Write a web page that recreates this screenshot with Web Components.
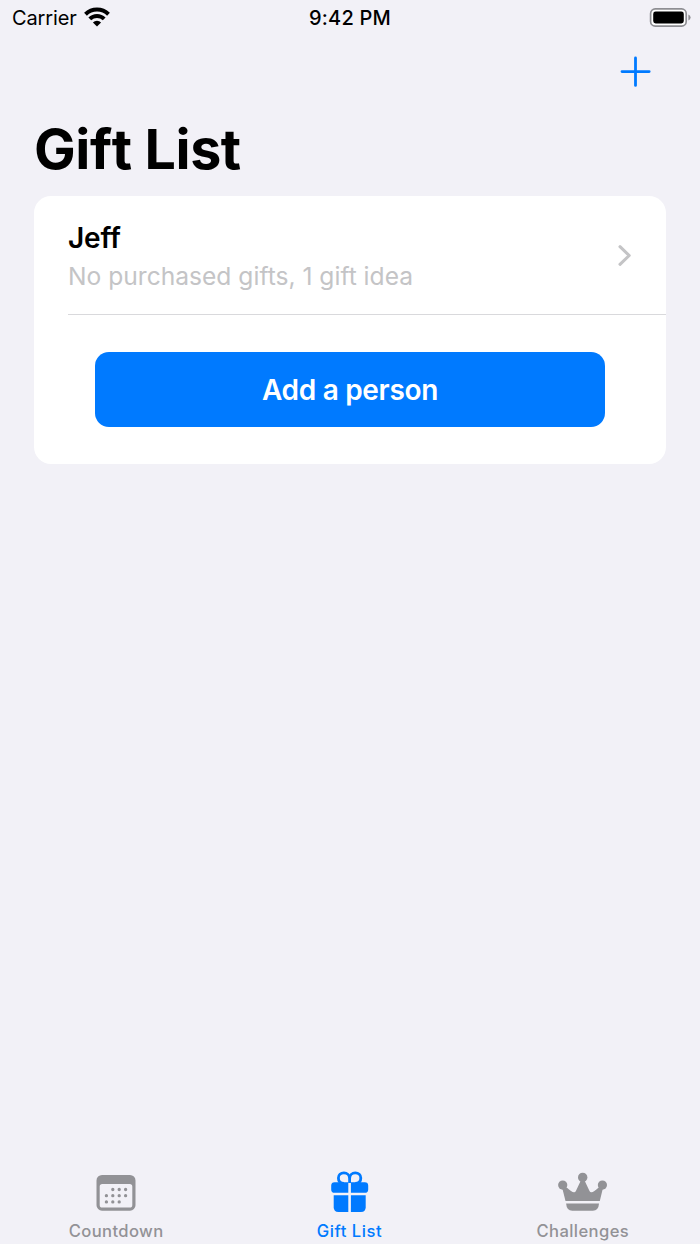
<!DOCTYPE html>
<html lang="en">
<head>
<meta charset="utf-8">
<title>Gift List</title>
<style>
  body {
    margin: 0;
    background: #f2f1f7;
    font-family: Inter, "Liberation Sans", sans-serif;
  }
</style>
</head>
<body>
<gift-app>
  <status-bar slot="status" carrier="Carrier" time="9:42 PM"></status-bar>
  <nav-header slot="header">Gift List</nav-header>
  <list-card>
    <person-row name="Jeff">No purchased gifts, 1 gift idea</person-row>
    <primary-button>Add a person</primary-button>
  </list-card>
  <tab-bar slot="tabs">
    <tab-item icon="calendar">Countdown</tab-item>
    <tab-item icon="gift" active>Gift List</tab-item>
    <tab-item icon="crown">Challenges</tab-item>
  </tab-bar>
</gift-app>

<script>
// Attach an open shadow root and fill it from a template
function mount(el, html) {
  const template = document.createElement('template')
  template.innerHTML = html
  el.attachShadow({ mode: 'open' }).appendChild(template.content.cloneNode(true))
}

class GiftApp extends HTMLElement {
  constructor() {
    super()
    mount(this, `
      <style>
        :host {
          display: flex;
          flex-direction: column;
          height: 1244px;
          width: 700px;
          overflow: hidden;
          background: #f2f1f7;
        }
        main { flex: 1; padding: 0 34px; }
      </style>
      <slot name="status"></slot>
      <slot name="header"></slot>
      <main><slot></slot></main>
      <slot name="tabs"></slot>
    `)
  }
}

class StatusBar extends HTMLElement {
  constructor() {
    super()
    mount(this, `
      <style>
        :host {
          display: grid;
          grid-template-columns: 1fr auto 1fr;
          align-items: center;
          height: 36px;
          padding: 0 9px 0 12px;
          font-size: 20px;
          line-height: 36px;
          color: #000;
        }
        .left { display: flex; align-items: center; gap: 7px; }
        .carrier { letter-spacing: -0.12px; }
        .time { font-weight: 500; letter-spacing: 0.2px; padding-right: 3px; }
        .right { display: flex; justify-content: flex-end; }
        svg { display: block; }
        .wifi { margin-bottom: 3px; }
      </style>
      <div class="left">
        <span class="carrier"></span>
        <svg class="wifi" width="26" height="20" viewBox="0 0 26 20">
          <g fill="none" stroke="#000" stroke-width="4">
            <path d="M1.500 7.300a16.400 16.400 0 0 1 23 0"/>
            <path d="M5.800 11.900a10.300 10.300 0 0 1 14.400 0"/>
          </g>
          <path d="M8.900 15.400a5.800 5.800 0 0 1 8.200 0L13 19.600z"/>
        </svg>
      </div>
      <span class="time"></span>
      <div class="right">
        <svg width="42" height="20" viewBox="0 0 42 20">
          <rect x="1.600" y="0.900" width="35.600" height="17.200" rx="4.600" fill="#fff" stroke="#8e8e93" stroke-width="1.700"/>
          <rect x="4.200" y="3.500" width="30.600" height="12" rx="2.400"/>
          <path d="M39.400 6.500q2.200 1 2.200 3t-2.200 3z" fill="#8e8e93"/>
        </svg>
      </div>
    `)
  }

  connectedCallback() {
    this.shadowRoot.querySelector('.carrier').textContent = this.getAttribute('carrier')
    this.shadowRoot.querySelector('.time').textContent = this.getAttribute('time')
  }
}

class NavHeader extends HTMLElement {
  constructor() {
    super()
    mount(this, `
      <style>
        :host { display: block; height: 160px; }
        .actions {
          display: flex;
          justify-content: flex-end;
          padding: 20px 49px 0 0;
        }
        button { border: 0; padding: 0; background: none; }
        svg { display: block; }
        h1 {
          margin: 28px 0 0 34px;
          font-size: 55.6px;
          line-height: 67px;
          font-weight: 700;
          font-kerning: none;
          letter-spacing: -0.4px;
          color: #000;
        }
      </style>
      <div class="actions">
        <button aria-label="Add">
          <svg width="31" height="31" viewBox="0 0 31 31">
            <path d="M15.500 2v27.400M2 15.600h27.200" stroke="#007aff" stroke-width="2.800" stroke-linecap="round"/>
          </svg>
        </button>
      </div>
      <h1><slot></slot></h1>
    `)
  }
}

class ListCard extends HTMLElement {
  constructor() {
    super()
    mount(this, `
      <style>
        :host {
          display: block;
          height: 268px;
          border-radius: 17px;
          background: #fff;
          overflow: hidden;
        }
      </style>
      <slot></slot>
    `)
  }
}

class PersonRow extends HTMLElement {
  constructor() {
    super()
    mount(this, `
      <style>
        :host {
          display: flex;
          align-items: center;
          box-sizing: border-box;
          height: 119px;
          margin-left: 34px;
          padding-right: 34px;
          border-bottom: 1px solid #d9d9dc;
        }
        .text { flex: 1; padding-top: 4px; }
        .name {
          font-size: 28px;
          line-height: 38px;
          font-weight: 600;
          letter-spacing: -0.2px;
          color: #000;
        }
        .detail {
          padding-bottom: 1px;
          font-size: 24.6px;
          line-height: 38px;
          letter-spacing: 0;
          color: #c4c4c6;
        }
        svg { display: block; }
      </style>
      <div class="text">
        <div class="name"></div>
        <div class="detail"><slot></slot></div>
      </div>
      <svg width="15" height="22" viewBox="0 0 15 22">
        <path d="M3 2.700l9.200 8.800L3 20.300" fill="none" stroke="#c4c4c6" stroke-width="3.100" stroke-linecap="round" stroke-linejoin="round"/>
      </svg>
    `)
  }

  connectedCallback() {
    this.shadowRoot.querySelector('.name').textContent = this.getAttribute('name')
  }
}

class PrimaryButton extends HTMLElement {
  constructor() {
    super()
    mount(this, `
      <style>
        :host { display: block; padding: 37px 61px; }
        button {
          display: block;
          width: 100%;
          height: 75px;
          padding: 0;
          border: 0;
          border-radius: 14px;
          background: #007aff;
          color: #fff;
          font: inherit;
          font-size: 28px;
          font-weight: 600;
          letter-spacing: -0.3px;
        }
      </style>
      <button><slot></slot></button>
    `)
  }
}

class TabBar extends HTMLElement {
  constructor() {
    super()
    mount(this, `
      <style>
        :host {
          display: grid;
          grid-template-columns: repeat(3, 1fr);
          height: 78px;
        }
      </style>
      <slot></slot>
    `)
  }
}

const icons = {
  calendar: `
    <path fill-rule="evenodd" d="M11 9h28a5.500 5.500 0 0 1 5.500 5.500v24.700a5.500 5.500 0 0 1-5.500 5.500h-28a5.500 5.500 0 0 1-5.500-5.500v-24.700a5.500 5.500 0 0 1 5.500-5.500z
      M11.300 18a2.600 2.600 0 0 0-2.600 2.600v18.400a2.600 2.600 0 0 0 2.600 2.600h27.400a2.600 2.600 0 0 0 2.600-2.600v-18.400a2.600 2.600 0 0 0-2.600-2.600z"/>
    <path fill="none" stroke="currentColor" stroke-width="3.300" stroke-linecap="round"
      d="M21.800 23.500h.01M28.200 23.500h.01M34.600 23.500h.01M15.400 29.700h.01M21.800 29.700h.01M28.200 29.700h.01M34.600 29.700h.01M15.400 35.900h.01M21.800 35.900h.01M28.200 35.900h.01"/>`,
  gift: `
    <path d="M24.300 16.200v10.600h-13.700q-3.400 0-3.400-3.400v-3.800q0-3.400 3.400-3.400z"/>
    <path d="M26.900 16.200v10.600h13.900q3.400 0 3.400-3.400v-3.800q0-3.400-3.400-3.400z"/>
    <path d="M24.300 29.300v16.600h-9.900q-4.700 0-4.700-4.700v-11.900z"/>
    <path d="M26.900 29.300v16.600h10.100q4.700 0 4.700-4.700v-11.900z"/>
    <path fill="none" stroke="currentColor" stroke-width="2.800" d="M25.600 17v-4.300c0-3.300-2.500-5.800-5.700-5.800-3.200 0-5.500 2.200-5.500 5 0 3 2 5.200 5.400 5.600M25.600 12.700c0-3.300 2.500-5.800 5.700-5.800 3.200 0 5.500 2.200 5.500 5 0 3-2 5.200-5.400 5.600"/>`,
  crown: `
    <circle cx="4.700" cy="19.100" r="4.600"/>
    <circle cx="24.700" cy="11.400" r="4.700"/>
    <circle cx="44.400" cy="19.100" r="4.600"/>
    <path d="M4 21l3.500 13.900h34.300L45.200 21l-4.500.4q-5 4.500-7.200 4.900-1.200.2-2-1.200L26.800 15h-4.200l-4.700 10.100q-.8 1.400-2 1.200-2.200-.4-7.200-4.900z"/>
    <path d="M8.100 37.600h32.900q-.5 7.200-6.200 7.200h-20.500q-5.700 0-6.200-7.200z"/>`
}

const boxes = {
  calendar: { width: 51, height: 51, view: '0 0 51 51' },
  gift: { width: 51, height: 51, view: '0 0 51 51' },
  crown: { width: 50, height: 51, view: '0 0 50 51' }
}

class TabItem extends HTMLElement {
  constructor() {
    super()
    mount(this, `
      <style>
        :host {
          display: flex;
          flex-direction: column;
          align-items: center;
          color: #929296;
        }
        :host([active]) { color: #007aff; }
        svg { display: block; fill: currentColor; flex: none; }
        .label {
          margin-top: 4px;
          padding-right: 1px;
          font-size: 16.6px;
          line-height: 20px;
          font-weight: 500;
          letter-spacing: 0.4px;
        }
        :host([active]) .label { letter-spacing: 0.55px; }
      </style>
      <svg></svg>
      <span class="label"><slot></slot></span>
    `)
  }

  connectedCallback() {
    const icon = this.getAttribute('icon')
    const box = boxes[icon]
    const svg = this.shadowRoot.querySelector('svg')
    svg.setAttribute('width', box.width)
    svg.setAttribute('height', box.height)
    svg.setAttribute('viewBox', box.view)
    svg.innerHTML = icons[icon]
  }
}

// Define the custom elements
customElements.define('gift-app', GiftApp)
customElements.define('status-bar', StatusBar)
customElements.define('nav-header', NavHeader)
customElements.define('list-card', ListCard)
customElements.define('person-row', PersonRow)
customElements.define('primary-button', PrimaryButton)
customElements.define('tab-bar', TabBar)
customElements.define('tab-item', TabItem)
</script>
</body>
</html>
